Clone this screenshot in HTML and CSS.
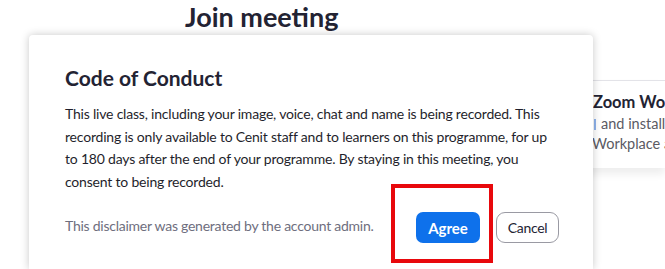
FILE: index.html
```html
<!DOCTYPE html>
<html lang="en">
<head>
<meta charset="utf-8">
<title>Join meeting</title>
<link rel="stylesheet" href="styles.css">
</head>
<body>
<main class="page">
  <h1 class="page-title">Join meeting</h1>
  <section class="side-card">
    <h2 class="side-title">Zoom Wo</h2>
    <p class="side-text"><span class="side-link"></span>and install</p>
    <p class="side-text side-text-second">Workplace a</p>
  </section>
</main>

<div class="dialog" role="dialog" aria-labelledby="coc-title">
  <h2 class="dialog-title" id="coc-title">Code of Conduct</h2>
  <p class="dialog-body">This live class, including your image, voice, chat and name is being recorded. This recording is only available to Cenit staff and to learners on this programme, for up to 180 days after the end of your programme. By staying in this meeting, you consent to being recorded.</p>
  <div class="dialog-footer">
    <span class="disclaimer">This disclaimer was generated by the account admin.</span>
    <div class="actions">
      <button class="btn btn-primary">Agree</button>
      <button class="btn btn-secondary">Cancel</button>
    </div>
  </div>
  <div class="highlight"></div>
</div>
</body>
</html>
```
FILE: styles.css
```css
* { box-sizing: border-box; }

html, body {
  margin: 0;
  padding: 0;
  background: #ffffff;
}

body {
  width: 665px;
  height: 269px;
  overflow: hidden;
  position: relative;
  font-family: "Lato", "Open Sans", sans-serif;
  color: #232333;
}

.page-title {
  margin: 0 0 0 185px;
  font-size: 27px;
  font-weight: 700;
  line-height: 34px;
  color: #232333;
}

.side-card {
  margin: 46px 0 0 440px;
  height: 88px;
  border-top: 1px solid #e3e3e8;
  background: #ffffff;
  box-shadow: 0 6px 8px rgba(0, 0, 0, 0.07);
  padding: 10px 0 0 153px;
  white-space: nowrap;
  overflow: hidden;
}

.side-title {
  margin: 0;
  font-size: 16.5px;
  font-weight: 700;
  line-height: 22px;
  color: #232333;
}

.side-text {
  margin: 0;
  font-size: 14.5px;
  line-height: 20px;
  color: #5a5a63;
}

.side-text:first-of-type {
  margin-top: 1px;
}

.side-link {
  display: inline-block;
  width: 2px;
  height: 11px;
  margin: 0 5px 0 1px;
  background: #8fb3ec;
  vertical-align: -1px;
}

.side-text-second {
  margin-left: -1px;
}

.dialog {
  position: absolute;
  left: 29px;
  top: 35px;
  width: 564px;
  height: 234px;
  background: #ffffff;
  border-radius: 4px 4px 0 0;
  box-shadow: 0 0 8px rgba(0, 0, 0, 0.22);
  padding: 29px 36px 0 36px;
}

.dialog-title {
  margin: 0;
  font-size: 21px;
  font-weight: 700;
  line-height: 28px;
  color: #232333;
}

.dialog-body {
  margin: 11px 0 0;
  font-size: 14px;
  letter-spacing: -0.2px;
  line-height: 22.5px;
  color: #1f1f2c;
}

.dialog-footer {
  display: flex;
  align-items: center;
  margin-top: 19px;
  margin-right: -2px;
}

.disclaimer {
  flex: 1;
  font-size: 14px;
  letter-spacing: -0.25px;
  line-height: 20px;
  margin-bottom: 4px;
  color: #6e6e7e;
}

.actions {
  display: flex;
  gap: 16px;
}

.btn {
  height: 31px;
  font-family: inherit;
  padding: 0;
  cursor: pointer;
}

.btn-primary {
  width: 64px;
  background: #0e71eb;
  color: #ffffff;
  font-size: 15px;
  font-weight: 700;
  border: none;
  border-radius: 7px;
}

.btn-secondary {
  width: 63px;
  background: #ffffff;
  color: #232333;
  font-size: 14px;
  letter-spacing: -0.3px;
  border: 1px solid #9a9aa3;
  border-radius: 9px;
}

.highlight {
  position: absolute;
  left: 362px;
  top: 149px;
  width: 102px;
  height: 79px;
  border: 4px solid #e8080c;
  pointer-events: none;
}
```
